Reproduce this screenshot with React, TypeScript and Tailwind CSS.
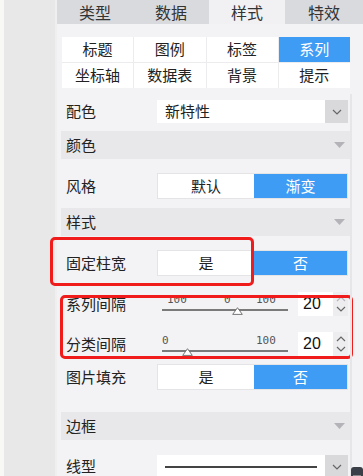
import React from "react";

const font = { fontFamily: '"Noto Sans CJK SC", "Noto Sans", sans-serif' };

const Chevron = ({ up = false }: { up?: boolean }) => (
  <svg width="10" height="6" viewBox="0 0 10 6" className={up ? "rotate-180" : ""}>
    <path d="M1 1 L5 5 L9 1" fill="none" stroke="#666" strokeWidth="1.2" />
  </svg>
);

const Caret = () => (
  <svg width="11" height="6" viewBox="0 0 11 6">
    <path d="M0 0 L11 0 L5.5 6 Z" fill="#b4b4b8" />
  </svg>
);

const Thumb = () => (
  <svg width="11" height="8" viewBox="0 0 11 8">
    <path d="M5.5 0.7 L10.3 7.4 L0.7 7.4 Z" fill="#fff" stroke="#777" strokeWidth="1" />
  </svg>
);

const Toggle = ({ left, right }: { left: string; right: string }) => (
  <div className="flex h-[26px] w-[191px] border border-[#e4e4e6]">
    <div className="flex w-[96px] items-center justify-center bg-white text-[15px] text-[#222]">{left}</div>
    <div className="flex flex-1 items-center justify-center bg-[#3f9cf5] text-[15px] text-white">{right}</div>
  </div>
);

const Row = ({ label, children, className = "" }: { label: string; children?: React.ReactNode; className?: string }) => (
  <div className={"flex items-center " + className}>
    <div className="w-[96px] pl-[5px] text-[15px] text-[#222]">{label}</div>
    {children}
  </div>
);

const Header = ({ label, className = "" }: { label: string; className?: string }) => (
  <div className={"flex h-[28px] items-center justify-between bg-[#e8e8ea] pl-[5px] pr-[5px] text-[15px] text-[#222] " + className}>
    <span>{label}</span>
    <Caret />
  </div>
);

const Select = ({ children }: { children?: React.ReactNode }) => (
  <div className="flex h-[23px] w-[191px]">
    <div className="flex flex-1 items-center bg-white px-[8px] text-[15px] text-[#222]">{children}</div>
    <div className="flex w-[23px] items-center justify-center bg-[#d9d9dc]">
      <Chevron />
    </div>
  </div>
);

// tick labels sit on the slider's own canvas
const Slider = ({ ticks, thumb }: { ticks: { x: number; t: string }[]; thumb: number }) => (
  <div className="relative h-[24px] w-[126px]" style={{ fontFamily: '"DejaVu Sans Mono", monospace' }}>
    {ticks.map((k) => (
      <span key={k.x} className="absolute top-[0px] text-[11px] leading-none text-[#555]" style={{ left: k.x }}>
        {k.t}
      </span>
    ))}
    <div className="absolute left-0 right-0 top-[15px] h-[2px] bg-[#7a7a7a]" />
    <div className="absolute top-[13px]" style={{ left: thumb }}>
      <Thumb />
    </div>
  </div>
);

const Spin = ({ value, dimUp = false }: { value: string; dimUp?: boolean }) => (
  <div className="flex h-[24px] w-[50px]">
    <div className="flex w-[35px] items-center bg-white pl-[5px] text-[16px] text-[#111]" style={{ fontFamily: '"Liberation Sans", sans-serif' }}>
      {value}
    </div>
    <div className="flex flex-1 flex-col items-center justify-center gap-[4px] bg-[#ededef]">
      <div className={dimUp ? "opacity-40" : ""}>
        <Chevron up />
      </div>
      <Chevron />
    </div>
  </div>
);

export default function App() {
  const subs = ["标题", "图例", "标签", "系列", "坐标轴", "数据表", "背景", "提示"];
  return (
    <div className="flex h-[476px] w-[363px] overflow-hidden bg-[#f3f3f5]" style={font}>
      <div className="w-[4px] bg-[#f8f8f5]" />
      <div className="w-[51px] bg-[#e8e8e8]" />
      <div className="w-[2px] bg-[#efefef]" />
      <div className="flex flex-1 flex-col">
        <div className="grid h-[25px] grid-cols-[76px_76px_76px_78px] text-[16px] text-[#333]">
          <div className="flex items-center justify-center bg-[#d9dadd]">类型</div>
          <div className="flex items-center justify-center bg-[#d9dadd]">数据</div>
          <div className="flex items-center justify-center bg-[#f1f1f3]">样式</div>
          <div className="flex items-center justify-center bg-[#d9dadd]">特效</div>
        </div>
        <div className="flex flex-1">
          <div className="relative w-[293px] pl-[4px]">
            <div className="ml-[1px] mt-[13px] grid w-[288px] grid-cols-4 gap-[1px] bg-[#ececee]">
              {subs.map((s) => (
                <div
                  key={s}
                  className={
                    "flex h-[25px] items-center justify-center text-[15px] " +
                    (s === "系列" ? "bg-[#3f9cf5] text-white" : "bg-white text-[#222]")
                  }
                >
                  {s}
                </div>
              ))}
            </div>
            <Row label="配色" className="mt-[11px] h-[25px]">
              <Select>新特性</Select>
            </Row>
            <Header label="颜色" className="mt-[7px]" />
            <Row label="风格" className="mt-[13px] h-[28px]">
              <Toggle left="默认" right="渐变" />
            </Row>
            <Header label="样式" className="mt-[8px]" />
            <Row label="固定柱宽" className="mt-[13px] h-[28px]">
              <Toggle left="是" right="否" />
            </Row>
            <Row label="系列间隔" className="mt-[14px] h-[26px]">
              <div className="ml-[5px] mt-[4px]">
                <Slider
                  ticks={[
                    { x: 5, t: "100" },
                    { x: 62, t: "0" },
                    { x: 94, t: "100" },
                  ]}
                  thumb={70}
                />
              </div>
              <div className="ml-[10px]">
                <Spin value="20" dimUp />
              </div>
            </Row>
            <Row label="分类间隔" className="mt-[14px] h-[26px]">
              <div className="ml-[5px] mt-[6px]">
                <Slider
                  ticks={[
                    { x: 0, t: "0" },
                    { x: 94, t: "100" },
                  ]}
                  thumb={20}
                />
              </div>
              <div className="ml-[10px]">
                <Spin value="20" />
              </div>
            </Row>
            <Row label="图片填充" className="mt-[6px] h-[28px]">
              <Toggle left="是" right="否" />
            </Row>
            <Header label="边框" className="mt-[21px]" />
            <Row label="线型" className="mt-[14px] h-[25px]">
              <Select>
                <div className="h-[2px] w-full bg-[#444]" />
              </Select>
            </Row>
            <div className="absolute left-[-7px] top-[213px] h-[49px] w-[204px] rounded-[5px] border-[3px] border-[#f01c1c]" />
            <div className="absolute left-[3px] top-[271px] h-[64px] w-[293px] rounded-[5px] border-[3px] border-[#f01c1c]" />
          </div>
          <div className="relative flex-1">
            <div className="absolute left-0 top-[70px] bottom-0 w-[2px] bg-[#e6e6e8]" />
            <div className="absolute left-[1px] top-[443px] h-[40px] w-[12px] rounded-[3px] bg-[#3a3f48] p-[2px]">
              <div className="mt-[6px] h-[1px] bg-[#888]" />
              <div className="mt-[2px] h-[1px] bg-[#888]" />
              <div className="mt-[2px] h-[1px] bg-[#888]" />
              <div className="mt-[2px] h-[1px] bg-[#c8d23a]" />
              <div className="mt-[2px] h-[1px] bg-[#c8d23a]" />
            </div>
          </div>
        </div>
      </div>
    </div>
  );
}
